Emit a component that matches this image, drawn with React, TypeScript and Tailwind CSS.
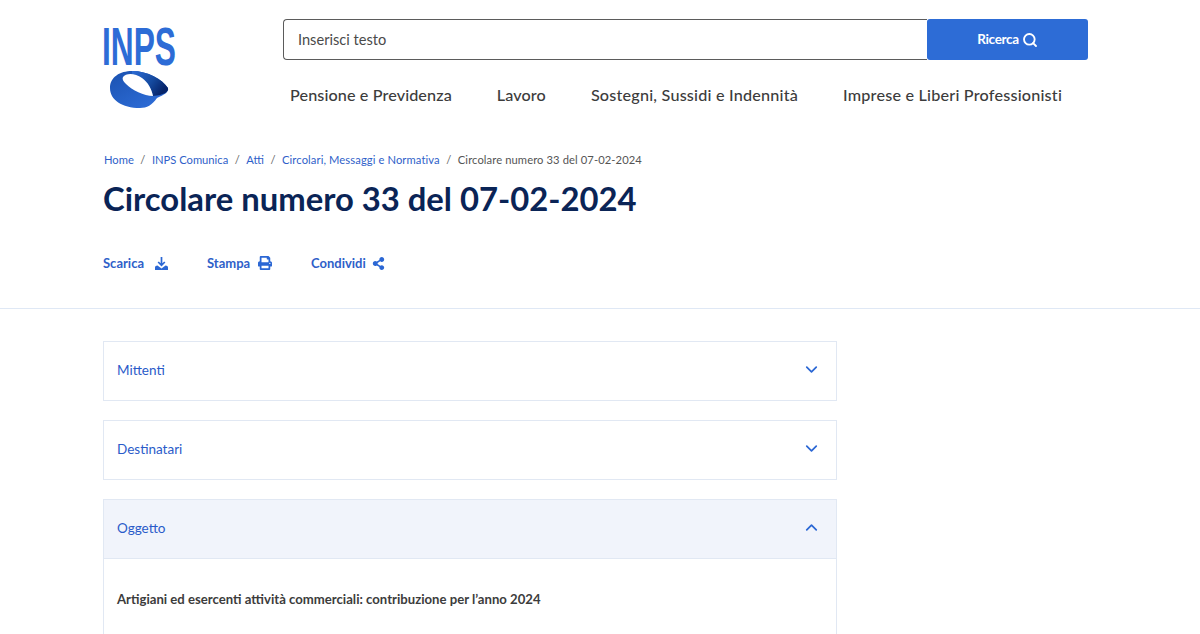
import { ChevronDown, ChevronUp, Search } from "lucide-react"
import { FaPrint, FaShareAlt } from "react-icons/fa"

const font = "font-['Lato','Noto_Sans',sans-serif]"

function Logo() {
  return (
    <svg width="86" height="100" viewBox="0 -12 86 100" className="-mt-[12px] block">
      <defs>
        <linearGradient id="ring" x1="0" y1="0.2" x2="0.7" y2="1">
          <stop offset="0" stopColor="#1d55b5" />
          <stop offset="1" stopColor="#2d6cd6" />
        </linearGradient>
        <linearGradient id="fold" x1="0" y1="0" x2="1" y2="0.5">
          <stop offset="0" stopColor="#2d6cd6" />
          <stop offset="0.6" stopColor="#154a9f" />
          <stop offset="1" stopColor="#06246a" />
        </linearGradient>
      </defs>
      <text
        transform="translate(0 43) scale(1.057 1.8)"
        fontFamily="Liberation Sans, sans-serif"
        fontWeight="700"
        fontSize="30"
        fill="#2d6cd6"
      >
        INPS
      </text>
      <path
        d="M8 66C8 55 18 49 30 49C46 49 60 57 66 66C67 70 62 73 55 76C50 83 45 86 38 86C20 86 8 78 8 66Z"
        fill="url(#ring)"
      />
      <path
        d="M30 49C46 49 60 57 66 66C67 70 62 73 51 74C50 68 46 60 40 56C36 53 33 52 30 52Z"
        fill="url(#fold)"
      />
      <path
        d="M21 55C24 51 33 51 40 56C46 60 50 68 51 74C42 74 30 68 24 62C21 59 20 57 21 55Z"
        fill="#fff"
      />
    </svg>
  )
}

function DownloadIcon() {
  return (
    <svg width="15" height="15" viewBox="0 0 15 15" className="text-[#2b67d4]">
      <path d="M7.5 1V9M4.2 6L7.5 9.4L10.8 6" fill="none" stroke="currentColor" strokeWidth="1.7" />
      <path d="M1 14V11.5C1 10.2 2 9.5 3.5 9.5L7.5 12.5L11.5 9.5C13 9.5 14 10.2 14 11.5V14Z" fill="currentColor" />
    </svg>
  )
}

function Panel({ title, open }: { title: string; open?: boolean }) {
  return (
    <div className={`flex h-[59.5px] items-center justify-between border border-[#e1e8f3] pb-[2px] pl-[13px] pr-[15px] ${open ? "bg-[#f1f4fb]" : "bg-white"}`}>
      <span className="text-[13.5px] text-[#2a5bc9]">{title}</span>
      {open ? (
        <ChevronUp size={19} strokeWidth={2.2} className="text-[#2b67d4]" />
      ) : (
        <ChevronDown size={19} strokeWidth={2.2} className="text-[#2b67d4]" />
      )}
    </div>
  )
}

export default function App() {
  return (
    <div className={`h-[634px] overflow-hidden bg-white ${font}`}>
      {/* Header */}
      <header className="ml-[102px] flex w-[986px] pt-[19px]">
        <div className="h-[91px] w-[181px] pt-[3px]">
          <Logo />
        </div>
        <div className="flex-1">
          <div className="flex h-[41px]">
            <div className="flex flex-1 items-center rounded-l-[4px] border border-r-0 border-[#5b5b5b] pl-[14px] text-[14.6px] text-[#4a4a4a]">
              Inserisci testo
            </div>
            <button className="flex w-[161px] items-center justify-center gap-[3px] rounded-[3px] bg-[#2d6cd6] text-[13.5px] font-bold tracking-[-0.3px] text-white">
              Ricerca
              <Search size={16} strokeWidth={2.8} />
            </button>
          </div>
          <nav className="mt-[23px] flex gap-[45px] pl-[7px] text-[16.2px] font-medium tracking-[0.1px] text-[#3c3c3c]">
            <span>Pensione e Previdenza</span>
            <span>Lavoro</span>
            <span className="tracking-[0.2px]">Sostegni, Sussidi e Indennità</span>
            <span className="tracking-[0.2px]">Imprese e Liberi Professionisti</span>
          </nav>
        </div>
      </header>

      {/* Title */}
      <section className="h-[199px] border-b border-[#dfe8f5] pl-[103px] pt-[42px]">
        <div className="flex items-center gap-[6.5px] pl-[1px] text-[11.2px] leading-[16px] text-[#666]">
          <span className="text-[#2f5fc9]">Home</span>
          <span>/</span>
          <span className="text-[#2f5fc9]">INPS Comunica</span>
          <span>/</span>
          <span className="text-[#2f5fc9]">Atti</span>
          <span>/</span>
          <span className="tracking-[0.1px] text-[#2f5fc9]">Circolari, Messaggi e Normativa</span>
          <span>/</span>
          <span className="tracking-[0.1px] text-[#555]">Circolare numero 33 del 07-02-2024</span>
        </div>
        <h1 className="mt-[11px] text-[32.8px] leading-[40px] font-bold text-[#0a2456]">
          Circolare numero 33 del 07-02-2024
        </h1>
        <div className="mt-[34px] flex items-center text-[13px] leading-[20px] font-bold text-[#2f5fc9]">
          <span className="flex w-[104px] items-center gap-[10px]">
            Scarica <DownloadIcon />
          </span>
          <span className="flex w-[104px] items-center gap-[8px]">
            Stampa <FaPrint size={14} className="text-[#2b67d4]" />
          </span>
          <span className="flex items-center gap-[6px]">
            Condividi <FaShareAlt size={13} className="text-[#2b67d4]" />
          </span>
        </div>
      </section>

      {/* Accordions */}
      <main className="ml-[103px] flex w-[734px] flex-col gap-[19.5px] pt-[32px]">
        <Panel title="Mittenti" />
        <Panel title="Destinatari" />
        <div>
          <Panel title="Oggetto" open />
          <div className="h-[120px] border-x border-[#e1e8f3] pl-[13px] pt-[31px] text-[13.15px] leading-[18px] font-bold text-[#3c3c3c]">
            Artigiani ed esercenti attività commerciali: contribuzione per l’anno 2024
          </div>
        </div>
      </main>
    </div>
  )
}
